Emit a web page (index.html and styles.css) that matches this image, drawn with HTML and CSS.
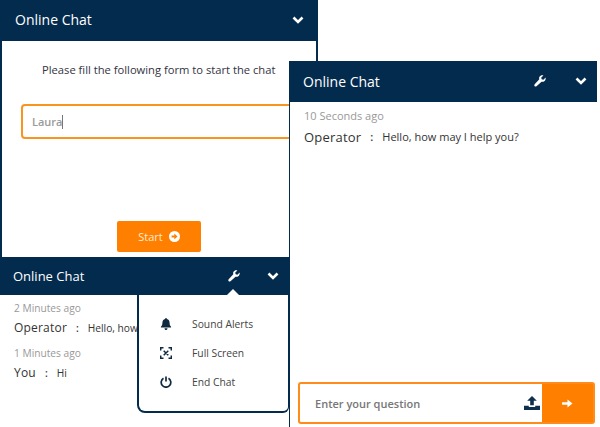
FILE: index.html
```html
<!DOCTYPE html>
<html lang="en">
<head>
  <meta charset="UTF-8" />
  <title>Online Chat</title>
  <link rel="stylesheet" href="styles.css">
</head>
<body>

  <!-- start form window -->
  <div class="window win-form">
    <div class="chat-head">
      <span class="chat-title">Online Chat</span>
      <svg class="chev" viewBox="0 0 12 8"><path d="M1.500 1.500 6 6l4.500-4.500" /></svg>
    </div>
    <div class="form-body">
      <p class="form-text">Please fill the following form to start the chat</p>
      <div class="name-input"><span class="name-val">Laura</span><span class="caret-line"></span></div>
      <button class="start-btn">Start
        <svg class="start-icon" viewBox="0 0 12 12"><circle cx="6" cy="6" r="6" fill="#fff" /><path d="M2.800 5h3V2.800L9.300 6l-3.500 3.200V7h-3z" fill="#ff8000" /></svg>
      </button>
    </div>
  </div>

  <!-- chat window with settings menu -->
  <div class="window win-menu">
    <div class="chat-head">
      <span class="chat-title">Online Chat</span>
      <svg class="wrench" viewBox="0 0 14 14"><path d="M13.500 3 11 5.500 8.900 5.100 8.500 3 11 .5C9.200-.1 7.300.5 6.400 2.100c-.5 1-.6 2-.2 3L.8 10.800c-.6.700-.6 1.600 0 2.200.6.600 1.500.6 2.100 0L8.800 7.800c1.100.4 2.300.1 3.200-.6 1.300-1 1.900-2.700 1.500-4.200z" /></svg>
      <svg class="chev" viewBox="0 0 12 8"><path d="M1.500 1.500 6 6l4.500-4.500" /></svg>
    </div>
    <div class="messages">
      <div class="msg-time">2 Minutes ago</div>
      <div class="msg"><strong>Operator</strong><span class="sep">:</span><span>Hello, how</span></div>
      <div class="msg-time">1 Minutes ago</div>
      <div class="msg"><strong>You</strong><span class="sep">:</span><span>Hi</span></div>
    </div>
    <div class="menu">
      <div class="menu-item">
        <svg viewBox="0 0 12 12"><path d="M6 0c.6 0 .9.4.9 1C8.700 1.400 9.600 2.800 9.600 4.800c0 2.200.6 3 1.500 3.900v.8H.9v-.8c.9-.9 1.500-1.700 1.500-3.900 0-2 .9-3.400 2.700-3.800C5.100.4 5.400 0 6 0zM4.500 10.200h3C7.500 11.200 6.800 12 6 12s-1.500-.8-1.500-1.800z" fill="#0f2a3f" /></svg>
        <span>Sound Alerts</span>
      </div>
      <div class="menu-item">
        <svg viewBox="0 0 12 12"><path d="M.7 3.500V.7h2.800M8.500.7h2.800v2.800M11.300 8.500v2.800H8.500M3.500 11.300H.7V8.500M3.700 3.700l4.600 4.600M8.300 3.700 3.700 8.300" fill="none" stroke="#0f2a3f" stroke-width="1.500" /></svg>
        <span>Full Screen</span>
      </div>
      <div class="menu-item">
        <svg viewBox="0 0 12 12"><path d="M3.500 2.300a4.800 4.800 0 1 0 5 0M6 .5v5" fill="none" stroke="#0f2a3f" stroke-width="1.700" /></svg>
        <span>End Chat</span>
      </div>
    </div>
    <div class="menu-tip"></div>
  </div>

  <!-- running chat window -->
  <div class="window win-chat">
    <div class="chat-head">
      <span class="chat-title">Online Chat</span>
      <svg class="wrench" viewBox="0 0 14 14"><path d="M13.500 3 11 5.500 8.900 5.100 8.500 3 11 .5C9.200-.1 7.300.5 6.400 2.100c-.5 1-.6 2-.2 3L.8 10.800c-.6.700-.6 1.600 0 2.200.6.600 1.500.6 2.100 0L8.800 7.800c1.100.4 2.300.1 3.200-.6 1.300-1 1.900-2.700 1.500-4.200z" /></svg>
      <svg class="chev" viewBox="0 0 12 8"><path d="M1.500 1.500 6 6l4.500-4.500" /></svg>
    </div>
    <div class="messages">
      <div class="msg-time">10 Seconds ago</div>
      <div class="msg"><strong>Operator</strong><span class="sep">:</span><span>Hello, how may I help you?</span></div>
    </div>
    <div class="ask-bar">
      <div class="ask-input">
        <span class="ask-text">Enter your question</span>
        <svg class="upload" viewBox="0 0 16 15" preserveAspectRatio="none"><path d="M8 0l4.800 5H9.800v5H6.200V5H3.200zM0 10.500h4.800v1.300h6.400v-1.300H16V15H0z" fill="#0f2f4d" /></svg>
      </div>
      <div class="ask-send">
        <svg viewBox="0 0 12 10"><path d="M0 3.600h6V.5L11.500 5 6 9.500V6.400H0z" fill="#fff" /></svg>
      </div>
    </div>
  </div>

</body>
</html>
```

FILE: styles.css
```css
body {
  font-family: 'Open Sans', sans-serif;
  background-color: white;
  margin: 0;
  padding: 0;
  width: 600px;
  height: 427px;
  position: relative;
  overflow: hidden;
}
.window {
  position: absolute;
  background: white;
  box-sizing: border-box;
  display: flex;
  flex-direction: column;
}
.win-form {
  left: 0;
  top: 0;
  width: 318px;
  height: 258px;
  border-left: 2px solid #032b4d;
  border-right: 2px solid #032b4d;
}
.win-menu {
  left: 0;
  top: 257px;
  width: 289px;
  height: 170px;
}
.win-chat {
  left: 289px;
  top: 61px;
  width: 308px;
  height: 366px;
  border-left: 1px solid #032b4d;
}
.chat-head {
  background-color: #032b4d;
  color: white;
  height: 38px;
  box-sizing: border-box;
  display: flex;
  align-items: center;
  padding: 0 10px 0 13px;
  flex-shrink: 0;
}
.win-form .chat-head {
  height: 41px;
  margin: 0 -2px;
  padding: 0 14px 2px 15px;
}
.win-chat .chat-head {
  height: 41px;
  margin-left: -1px;
  padding: 0 10px 1px 14px;
}
.chat-title {
  font-size: 14px;
  flex: 1;
}
.win-menu .chat-title {
  font-size: 13px;
}
.chev {
  width: 12px;
  height: 8px;
  fill: none;
  stroke: white;
  stroke-width: 2.600;
}
.wrench {
  width: 12px;
  height: 12px;
  fill: white;
  margin-right: 27px;
}
.win-chat .wrench {
  margin-right: 29px;
}
.form-body {
  flex: 1;
  position: relative;
}
.form-text {
  font-size: 11.200px;
  color: #33333f;
  margin: 21px 0 0 40px;
  line-height: 15px;
}
.name-input {
  margin: 27px 0 0 19px;
  height: 35px;
  width: 300px;
  box-sizing: border-box;
  border: 2px solid #f7951e;
  border-radius: 4px;
  display: flex;
  align-items: center;
  padding-left: 9px;
}
.name-val {
  font-size: 11px;
  color: #9a9a9a;
  font-weight: 600;
}
.caret-line {
  width: 1px;
  height: 14px;
  background-color: #777;
}
.start-btn {
  position: absolute;
  left: 115px;
  top: 180px;
  width: 84px;
  height: 31px;
  background-color: #ff8000;
  color: #ffe9cf;
  border: none;
  border-radius: 2px;
  font-family: inherit;
  font-size: 11px;
  display: flex;
  align-items: center;
  justify-content: center;
  gap: 6px;
  padding: 0;
}
.start-icon {
  width: 11px;
  height: 11px;
}
.messages {
  padding: 6px 14px;
  color: #333;
}
.msg-time {
  font-size: 10.200px;
  color: #999;
  line-height: 15px;
  margin-bottom: 3px;
}
.msg {
  display: flex;
  align-items: center;
  font-size: 10.200px;
  line-height: 18px;
  margin-bottom: 9px;
  white-space: nowrap;
}
.msg strong {
  font-size: 12px;
  font-weight: 400;
  letter-spacing: 0.2px;
}
.sep {
  margin: 0 9px;
  font-weight: 600;
}
.win-chat .msg-time {
  font-size: 11px;
  margin-bottom: 5px;
}
.win-chat .msg {
  font-size: 11px;
}
.win-chat .msg strong {
  font-size: 13px;
}
.menu {
  position: absolute;
  left: 137px;
  top: 38px;
  width: 152px;
  height: 118px;
  box-sizing: border-box;
  background: white;
  border-left: 2px solid #032b4d;
  border-bottom: 2px solid #032b4d;
  border-right: 1px solid #032b4d;
  border-radius: 0 0 6px 8px;
  padding: 19px 0 0 21px;
  display: flex;
  flex-direction: column;
  gap: 9px;
}
.menu-item {
  display: flex;
  align-items: center;
  gap: 20px;
  height: 20px;
  font-size: 10.300px;
  color: #444;
}
.menu-item svg {
  width: 12px;
  height: 12px;
}
.menu-tip {
  position: absolute;
  left: 227px;
  top: 32px;
  border-left: 6px solid transparent;
  border-right: 6px solid transparent;
  border-bottom: 6px solid white;
}
.ask-bar {
  position: absolute;
  left: 8px;
  top: 321px;
  width: 297px;
  height: 42px;
  box-sizing: border-box;
  display: flex;
  border: 2px solid #ff8c1a;
  border-radius: 3px;
}
.ask-input {
  flex: 1;
  display: flex;
  align-items: center;
  justify-content: space-between;
  padding: 0 2px 0 15px;
}
.ask-text {
  font-size: 11px;
  font-weight: 600;
  color: #777;
}
.upload {
  width: 16px;
  height: 14px;
}
.ask-send {
  width: 51px;
  background-color: #ff8000;
  display: flex;
  align-items: center;
  justify-content: center;
}
.ask-send svg {
  width: 11px;
  height: 9px;
}
```
